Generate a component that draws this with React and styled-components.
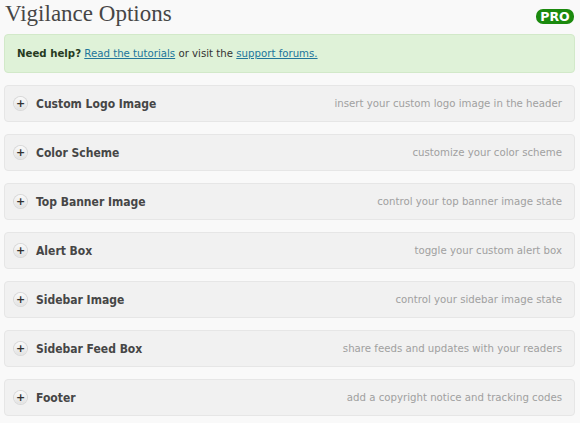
import React from 'react';
import styled, { createGlobalStyle } from 'styled-components';

const sections = [
  { title: 'Custom Logo Image', desc: 'insert your custom logo image in the header' },
  { title: 'Color Scheme', desc: 'customize your color scheme' },
  { title: 'Top Banner Image', desc: 'control your top banner image state' },
  { title: 'Alert Box', desc: 'toggle your custom alert box' },
  { title: 'Sidebar Image', desc: 'control your sidebar image state' },
  { title: 'Sidebar Feed Box', desc: 'share feeds and updates with your readers' },
  { title: 'Footer', desc: 'add a copyright notice and tracking codes' },
];

function App() {
  return (
    <Page>
      <GlobalStyle />
      <Header>
        <Title>Vigilance Options</Title>
        <ProBadge>PRO</ProBadge>
      </Header>
      <HelpBox>
        <strong>Need help?</strong> <a href="#">Read the tutorials</a> or visit the{' '}
        <a href="#">support forums.</a>
      </HelpBox>
      <List>
        {sections.map((s) => (
          <Row key={s.title}>
            <Toggle>+</Toggle>
            <RowTitle>{s.title}</RowTitle>
            <RowDesc>{s.desc}</RowDesc>
          </Row>
        ))}
      </List>
    </Page>
  );
}

const GlobalStyle = createGlobalStyle`
  html, body {
    margin: 0;
    background: #f9f9f9;
  }
`;

const Page = styled.div`
  width: 580px;
  height: 423px;
  padding: 0 5px 0 4px;
  box-sizing: border-box;
  font-family: "DejaVu Sans", "Liberation Sans", sans-serif;
  overflow: hidden;
`;

const Header = styled.div`
  display: flex;
  justify-content: space-between;
  align-items: flex-start;
  height: 34px;
`;

const Title = styled.h1`
  margin: 0;
  padding-left: 1px;
  font-family: "Liberation Serif", serif;
  font-weight: normal;
  font-size: 23px;
  line-height: 28px;
  color: #464646;
`;

const ProBadge = styled.span`
  margin-top: 9px;
  margin-right: 1px;
  width: 38px;
  height: 15px;
  border-radius: 7px;
  background: #1b8a0e;
  color: #fff;
  font-family: "DejaVu Sans", sans-serif;
  font-weight: bold;
  font-size: 12.5px;
  line-height: 15px;
  text-align: center;
`;

const HelpBox = styled.div`
  height: 37px;
  padding: 0 12px;
  border: 1px solid #d2e9c9;
  border-radius: 4px;
  background: #dff2d8;
  font-size: 10.2px;
  line-height: 37px;
  color: #333;

  strong {
    color: #263a21;
  }

  a {
    color: #21759b;
  }
`;

const List = styled.div`
  display: flex;
  flex-direction: column;
  gap: 12px;
  margin-top: 12px;
`;

const Row = styled.div`
  display: flex;
  align-items: center;
  height: 37px;
  padding: 0 12px 0 9px;
  border: 1px solid #e6e6e6;
  border-radius: 4px;
  background: #f1f1f1;
  box-sizing: border-box;
`;

const Toggle = styled.span`
  display: flex;
  align-items: center;
  justify-content: center;
  width: 13px;
  height: 13px;
  border-radius: 50%;
  background: linear-gradient(#fafafa, #e2e2e2);
  box-shadow: 0 0 0 1px #d8d8d8;
  color: #333;
  font-size: 11px;
  font-weight: bold;
  line-height: 1;
`;

const RowTitle = styled.span`
  margin-left: 9px;
  font-family: "DejaVu Sans Condensed", "DejaVu Sans", sans-serif;
  font-stretch: condensed;
  font-weight: bold;
  font-size: 12px;
  color: #464646;
`;

const RowDesc = styled.span`
  margin-left: auto;
  font-size: 10.2px;
  color: #a0a0a0;
`;

export default App;
